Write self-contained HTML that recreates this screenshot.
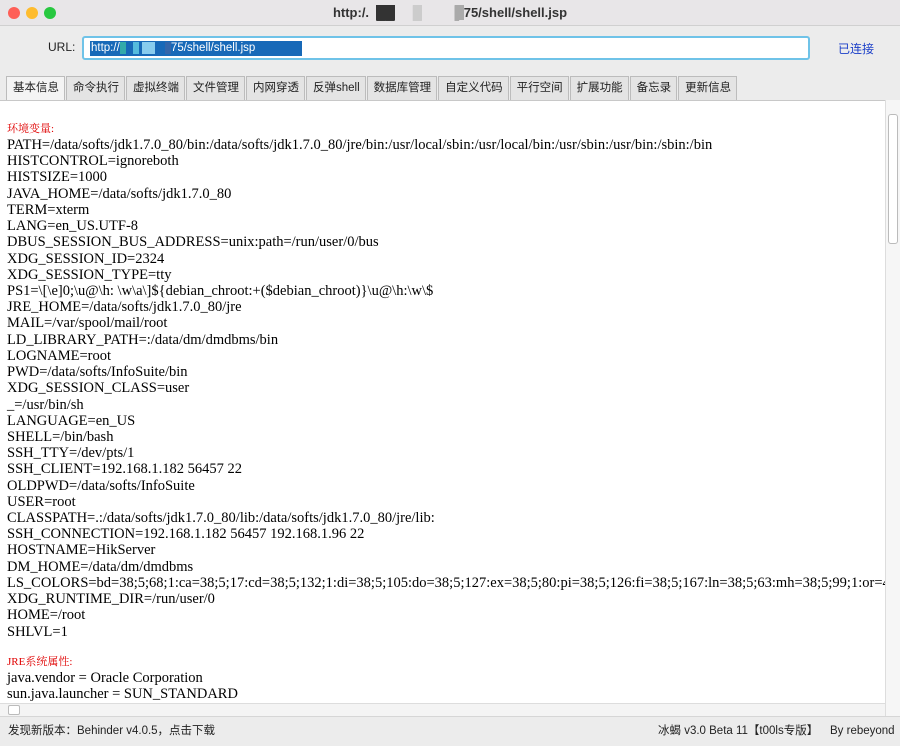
<!DOCTYPE html>
<html><head><meta charset="utf-8"><style>
*{margin:0;padding:0;box-sizing:border-box}
body{width:900px;height:745px;overflow:hidden;background:#ececec;font-family:"Liberation Sans","Noto Sans CJK SC",sans-serif;position:relative}
.title{position:absolute;left:0;top:0;width:900px;height:26px;background:#e8e6e8;border-bottom:1px solid #d0d0d0;text-align:center;font-size:13px;line-height:26px;color:#333;font-weight:bold}
.dot{position:absolute;top:7px;width:12px;height:12px;border-radius:50%}
.url{position:absolute;left:48px;top:40px;font-size:12px;color:#222}
.ubox{position:absolute;left:82px;top:36px;width:728px;height:24px;border:2px solid #6fc3e8;border-radius:3px;background:#fff}
.sel{position:absolute;left:6px;top:3px;height:15px;background:#1769b8;color:#fff;font-size:11.5px;line-height:15px;padding:0 1px;width:212px;white-space:nowrap;overflow:hidden}
.conn{position:absolute;left:838px;top:40px;font-size:12px;color:#1a3ec8}
.tabs{position:absolute;left:6px;top:76px;height:24px;display:flex}
.tab{height:24px;border:1px solid #bcbcbc;border-bottom:none;background:#e4e4e4;font-size:11.5px;line-height:23px;padding:0 5px 0 6px;color:#222;margin-right:1px}
.tab.a{background:#f4f4f4}
.content{position:absolute;left:0;top:100px;width:885px;height:603px;background:#fff;border-top:1px solid #c8c8c8;font-family:"Liberation Serif","Noto Serif CJK SC",serif;font-size:14.5px;color:#000;padding-left:7px;white-space:pre;overflow:hidden}
.h{color:#e00000;font-size:11px;height:16px;line-height:16px}
.l{height:16.23px;line-height:16.23px}
.vs{position:absolute;left:885px;top:100px;width:15px;height:616px;background:#f6f6f6;border-left:1px solid #ddd}
.hs{position:absolute;left:0;top:703px;width:885px;height:13px;background:#f4f4f4;border-top:1px solid #ddd}
.status{position:absolute;left:0;top:716px;width:900px;height:29px;background:#ececec;border-top:1px solid #d6d6d6;font-size:11.5px;line-height:29px;color:#222}
</style></head><body>
<div class="title"><span class="dot" style="left:8px;background:#fe5f57"></span><span class="dot" style="left:26px;background:#febc2e"></span><span class="dot" style="left:44px;background:#28c840"></span>http:/.&nbsp;&nbsp;<span style="background:#333;color:#333">██</span>&nbsp;&nbsp;&nbsp;&nbsp;&nbsp;<span style="background:#ccc;color:#ccc">█</span>&nbsp;&nbsp;&nbsp;&nbsp;&nbsp;&nbsp;&nbsp;&nbsp;&nbsp;<span style="background:#aaa;color:#aaa">▌</span>75/shell/shell.jsp</div>
<div class="url">URL:</div>
<div class="ubox"><div class="sel">http://<span style="background:#3aa;">&nbsp;&nbsp;</span>&nbsp;&nbsp;<span style="background:#5bd">&nbsp;&nbsp;</span>&nbsp;<span style="background:#8ce">&nbsp;&nbsp;&nbsp;&nbsp;</span>&nbsp;&nbsp;&nbsp;<span style="background:#36a">&nbsp;&nbsp;</span>75/shell/shell.jsp</div></div>
<div class="conn">已连接</div>
<div class="tabs"><div class="tab a">基本信息</div><div class="tab">命令执行</div><div class="tab">虚拟终端</div><div class="tab">文件管理</div><div class="tab">内网穿透</div><div class="tab">反弹shell</div><div class="tab">数据库管理</div><div class="tab">自定义代码</div><div class="tab">平行空间</div><div class="tab">扩展功能</div><div class="tab">备忘录</div><div class="tab">更新信息</div></div>
<div class="content"><div style="height:20px"></div><div class="h">环境变量:</div><div class="l">PATH=/data/softs/jdk1.7.0_80/bin:/data/softs/jdk1.7.0_80/jre/bin:/usr/local/sbin:/usr/local/bin:/usr/sbin:/usr/bin:/sbin:/bin</div><div class="l">HISTCONTROL=ignoreboth</div><div class="l">HISTSIZE=1000</div><div class="l">JAVA_HOME=/data/softs/jdk1.7.0_80</div><div class="l">TERM=xterm</div><div class="l">LANG=en_US.UTF-8</div><div class="l">DBUS_SESSION_BUS_ADDRESS=unix:path=/run/user/0/bus</div><div class="l">XDG_SESSION_ID=2324</div><div class="l">XDG_SESSION_TYPE=tty</div><div class="l">PS1=\[\e]0;\u@\h: \w\a\]${debian_chroot:+($debian_chroot)}\u@\h:\w\$</div><div class="l">JRE_HOME=/data/softs/jdk1.7.0_80/jre</div><div class="l">MAIL=/var/spool/mail/root</div><div class="l">LD_LIBRARY_PATH=:/data/dm/dmdbms/bin</div><div class="l">LOGNAME=root</div><div class="l">PWD=/data/softs/InfoSuite/bin</div><div class="l">XDG_SESSION_CLASS=user</div><div class="l">_=/usr/bin/sh</div><div class="l">LANGUAGE=en_US</div><div class="l">SHELL=/bin/bash</div><div class="l">SSH_TTY=/dev/pts/1</div><div class="l">SSH_CLIENT=192.168.1.182 56457 22</div><div class="l">OLDPWD=/data/softs/InfoSuite</div><div class="l">USER=root</div><div class="l">CLASSPATH=.:/data/softs/jdk1.7.0_80/lib:/data/softs/jdk1.7.0_80/jre/lib:</div><div class="l">SSH_CONNECTION=192.168.1.182 56457 192.168.1.96 22</div><div class="l">HOSTNAME=HikServer</div><div class="l">DM_HOME=/data/dm/dmdbms</div><div class="l">LS_COLORS=bd=38;5;68;1:ca=38;5;17:cd=38;5;132;1:di=38;5;105:do=38;5;127:ex=38;5;80:pi=38;5;126:fi=38;5;167:ln=38;5;63:mh=38;5;99;1:or=48;5;</div><div class="l">XDG_RUNTIME_DIR=/run/user/0</div><div class="l">HOME=/root</div><div class="l">SHLVL=1</div><div style="height:14px"></div><div class="h">JRE系统属性:</div><div class="l">java.vendor = Oracle Corporation</div><div class="l">sun.java.launcher = SUN_STANDARD</div></div>
<div class="vs"><div style="position:absolute;left:2px;top:14px;width:10px;height:130px;background:#fff;border:1px solid #bbb;border-radius:3px"></div></div>
<div class="hs"><div style="position:absolute;left:8px;top:1px;width:12px;height:10px;background:#fff;border:1px solid #bbb;border-radius:2px"></div></div>
<div class="status"><span style="position:absolute;left:8px">发现新版本：Behinder v4.0.5，点击下载</span><span style="position:absolute;left:658px">冰蝎 v3.0 Beta 11【t00ls专版】</span><span style="position:absolute;left:830px">By rebeyond</span></div>
</body></html>
